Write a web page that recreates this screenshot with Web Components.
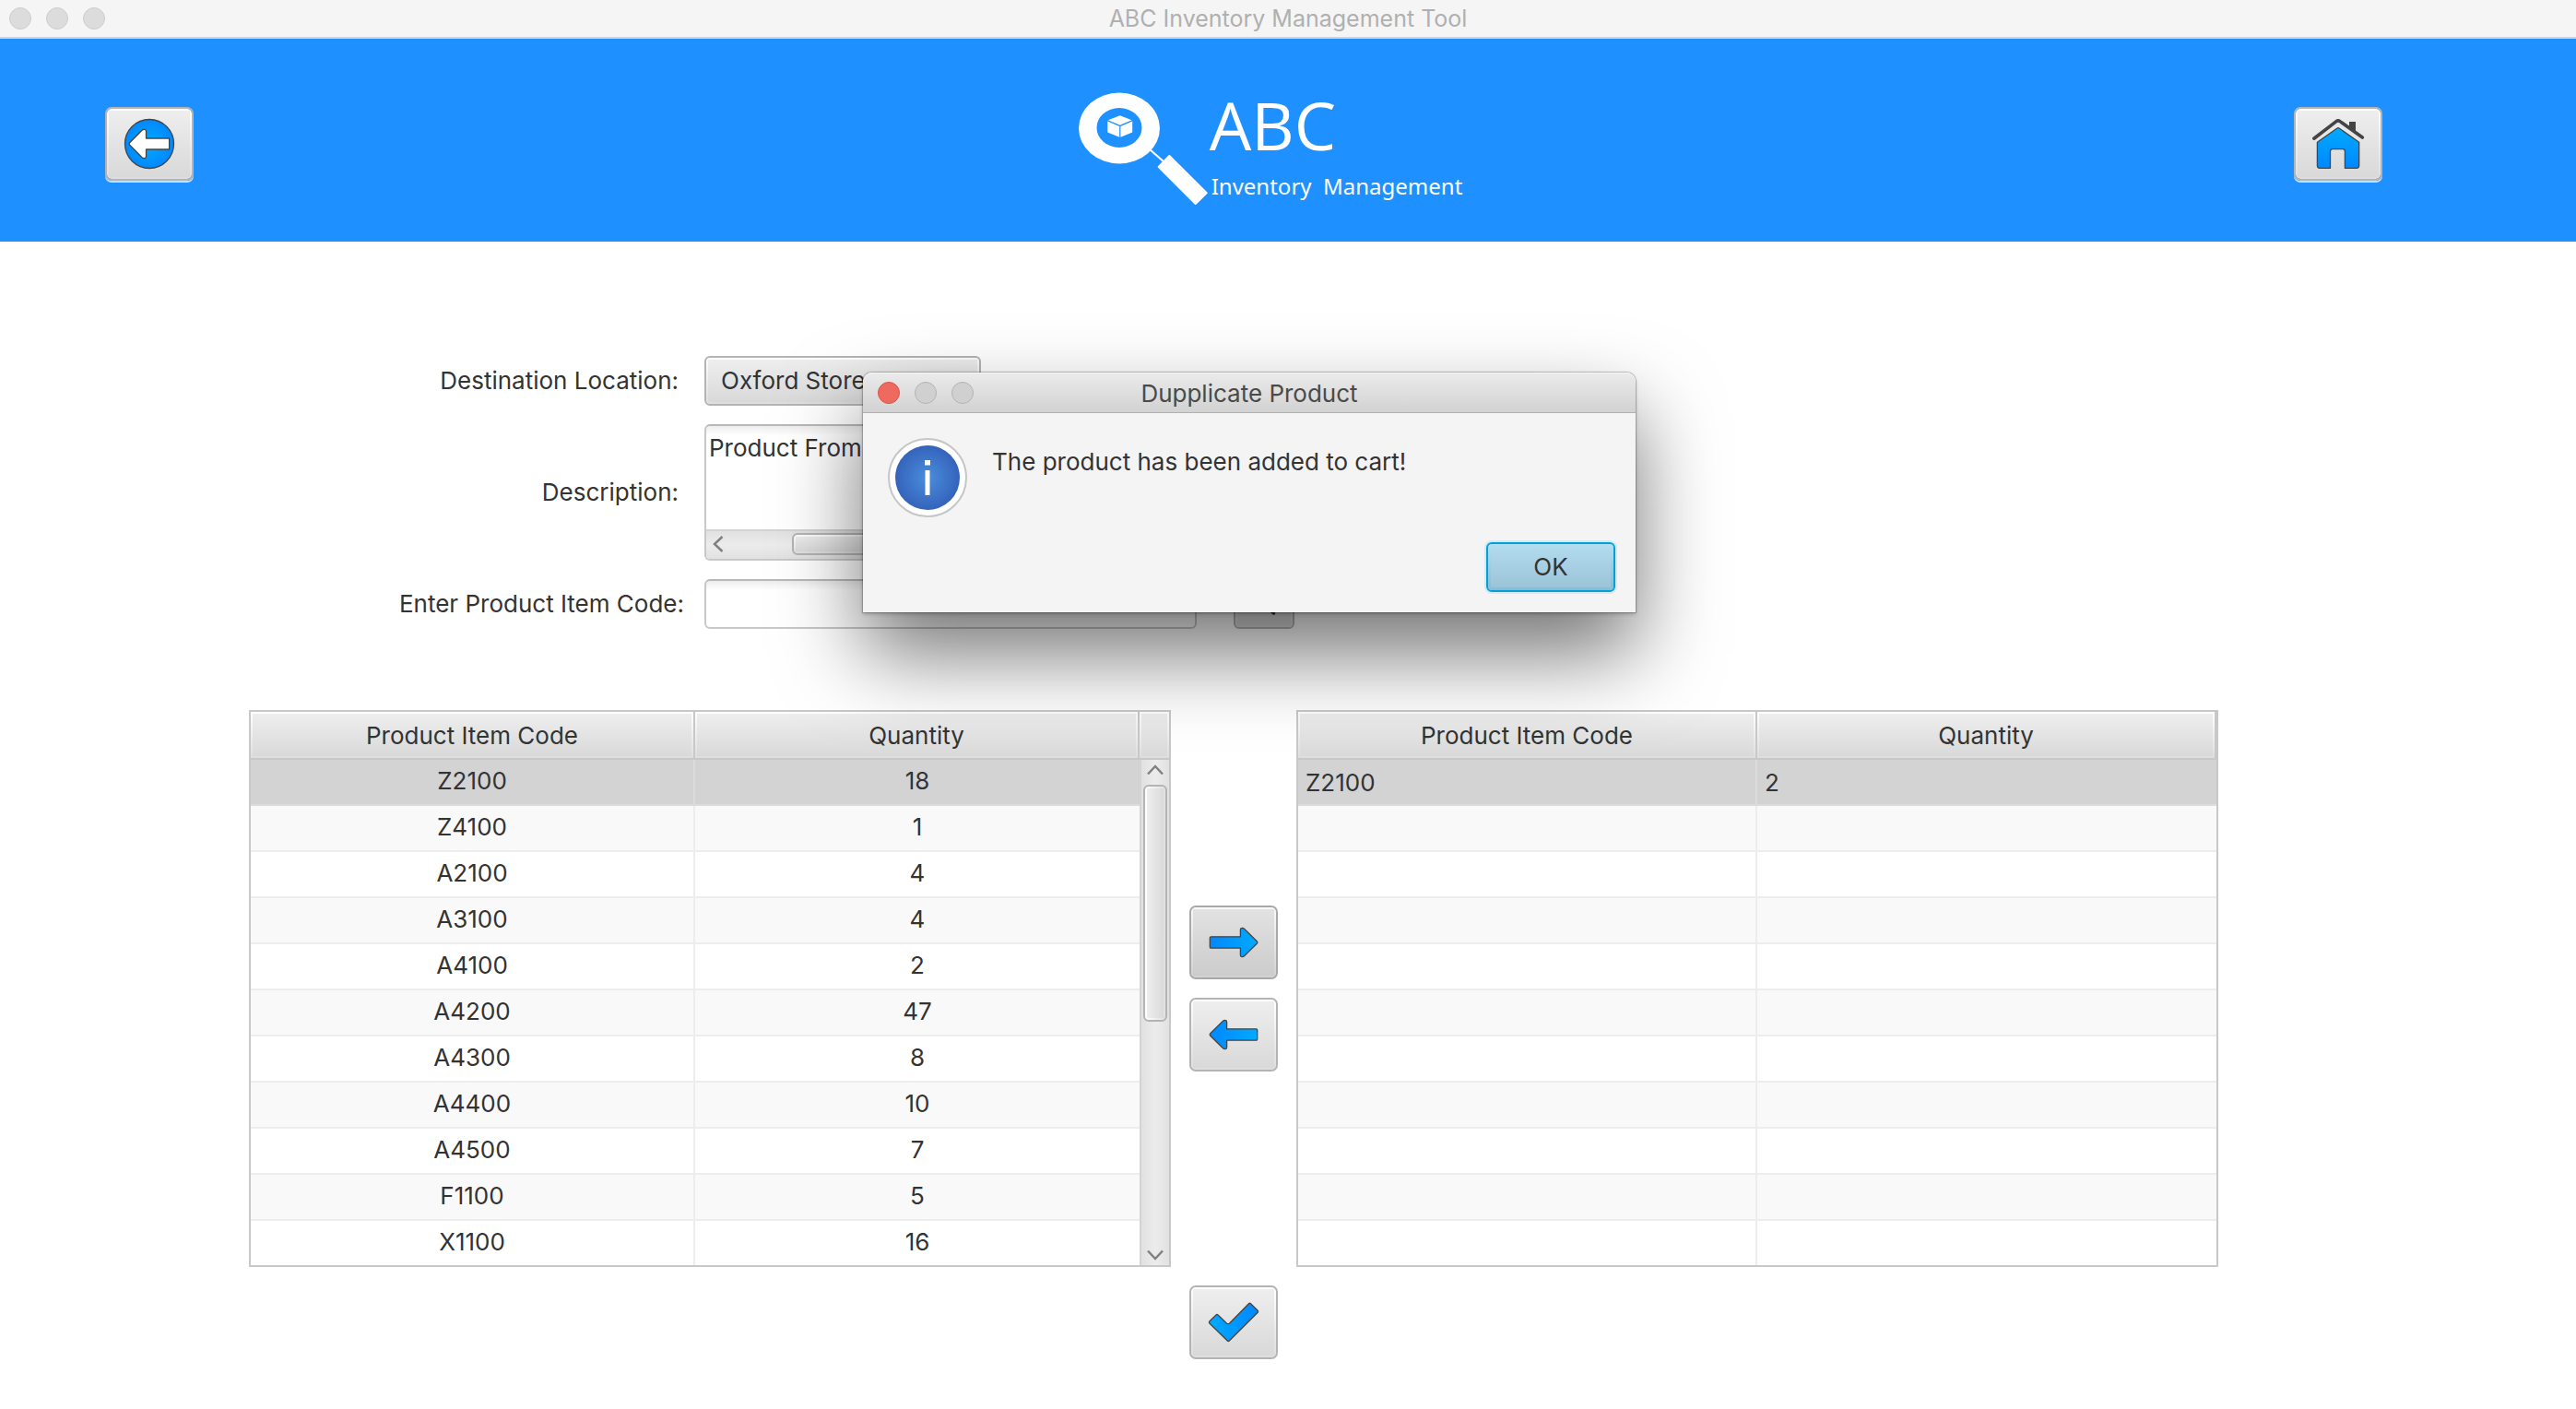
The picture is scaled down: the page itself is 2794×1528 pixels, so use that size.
<!DOCTYPE html>
<html lang="en">
<head>
<meta charset="utf-8">
<title>ABC Inventory Management Tool</title>
<style>
  html { --rim: #b4b4b4; --line: #c8c8c8; --ink: #333; }
  body { margin: 0; background: #fff; color: #333; font: 26px/32px Inter, "Liberation Sans", sans-serif; }
</style>
</head>
<body>
<inventory-app></inventory-app>

<template id="tpl-window-dots">
  <style>
    :host { display: flex; gap: 16px; }
    i { box-sizing: border-box; width: 24px; height: 24px; border-radius: 50%; background: var(--dot, #dcdcdc); border: 1px solid var(--dot-rim, #cdcdcd); }
    :host([active]) i:first-of-type { background: #ee6a5f; border-color: #d9544a; }
  </style>
  <i></i><i></i><i></i>
</template>

<template id="tpl-icon-button">
  <style>
    :host { display: block; width: 96px; }
    button {
      box-sizing: border-box; display: flex; align-items: center; justify-content: center;
      width: 100%; height: 80px; padding: 0; border: 2px solid var(--rim); border-radius: 7px;
      background:
        linear-gradient(#eeeeee, #d9d9d9) 2px 2px / calc(100% - 4px) calc(100% - 4px) no-repeat padding-box,
        linear-gradient(#ffffff, #dedede) padding-box;
    }
    :host([raised]) button { box-shadow: 0 2px 0 rgba(255, 255, 255, .73); }
    :host([hovered]) button {
      border-color: #a9a9a9;
      background:
        linear-gradient(#e2e2e2, #cccccc) 2px 2px / calc(100% - 4px) calc(100% - 4px) no-repeat padding-box,
        linear-gradient(#fafafa, #d2d2d2) padding-box;
    }
  </style>
  <button type="button"><slot></slot></button>
</template>

<template id="tpl-app-logo">
  <style>
    :host { display: flex; color: #fff; font-family: "Open Sans", "Noto Sans", sans-serif; }
    svg { flex: none; }
    .name { font-size: 72px; line-height: 74px; }
    .sub { margin-top: 12px; padding-left: 2px; font-family: "Noto Sans", sans-serif; font-size: 24px; line-height: 36px; white-space: pre; }
  </style>
  <svg width="144" height="126" viewBox="0 0 144 126" aria-hidden="true">
    <path fill="#fff" fill-rule="evenodd" d="M2 41a44 38.500 0 1 0 88 0a44 38.500 0 1 0 -88 0zM21.500 40.500a24.500 21.500 0 1 1 49 0a24.500 21.500 0 1 1 -49 0z"/>
    <path fill="#fff" d="M46.800 27.300L59.500 32.300L46.800 37.800L33.800 32.300zM33.300 33.500L46.200 39V50.700L33.300 45.500zM60.200 33.500L47.400 39V50.700L60.200 45.500z"/>
    <path stroke="#fff" stroke-width="2.200" d="M79 64L95 78"/>
    <path fill="#fff" stroke="#fff" stroke-width="2" stroke-linejoin="round" d="M88.700 83L100.300 71L140.700 111.300L128.700 123z"/>
  </svg>
  <div><div class="name">ABC</div><div class="sub">Inventory  Management</div></div>
</template>

<template id="tpl-scroll-bar">
  <style>
    :host { display: flex; box-sizing: border-box; background: linear-gradient(90deg, #e1e1e1, #ececec 50%, #e1e1e1); border-left: 2px solid #d4d4d4; flex-direction: column; align-items: center; padding: 0 2px; }
    :host([horizontal]) { flex-direction: row; border-left: 0; border-top: 2px solid #d4d4d4; padding: 2px 0 4px; background: linear-gradient(#e1e1e1, #ececec 50%, #e1e1e1); }
    button { display: flex; flex: none; align-items: center; justify-content: center; width: 26px; height: 22px; padding: 0; border: 0; background: none; }
    :host([horizontal]) button { width: 26px; height: 24px; }
    svg { flex: none; fill: none; stroke: #808080; stroke-width: 2.500; }
    :host([horizontal]) svg { transform: rotate(-90deg); }
    .track { display: flex; flex: 1; align-self: stretch; flex-direction: inherit; }
    .thumb {
      box-sizing: border-box; flex: 0 0 var(--thumb, 50%); margin-top: var(--start-y, 0); margin-left: var(--start-x, 0);
      border: 2px solid var(--rim); border-radius: 6px;
      background:
        linear-gradient(var(--turn, 90deg), #eeeeee, #dadada) 2px 2px / calc(100% - 4px) calc(100% - 4px) no-repeat padding-box,
        linear-gradient(var(--turn, 90deg), #ffffff, #e0e0e0) padding-box;
    }
  </style>
  <button type="button" aria-label="Scroll back"><svg width="20" height="12" viewBox="0 0 20 12"><path d="M2 10.500L10 2L18 10.500"/></svg></button>
  <div class="track"><div class="thumb"></div></div>
  <button type="button" aria-label="Scroll forward"><svg width="20" height="12" viewBox="0 0 20 12"><path d="M2 1.500L10 10L18 1.500"/></svg></button>
</template>

<template id="tpl-stock-table">
  <style>
    :host { display: flex; border: 2px solid var(--line); background: #fff; }
    table { flex: 1; width: 100%; table-layout: fixed; border-spacing: 0; }
    th, .corner {
      box-sizing: border-box; height: 52px; padding: 2px 0 0; font-weight: 400; border: 0 solid var(--line); border-width: 0 2px 2px 0;
      background:
        linear-gradient(#eeeeee, #d9d9d9) 2px 2px / calc(100% - 4px) calc(100% - 4px) no-repeat padding-box,
        linear-gradient(#ffffff, #dedede) padding-box;
    }
    td { box-sizing: border-box; height: 50px; padding: 2px 8px 0; border: 0 solid #ededed; border-width: 0 2px 2px 0; }
    td:last-child { border-right: 0; }
    tr:nth-child(even) td { background: #f9f9f9; }
    tr:last-child td { height: 48px; border-bottom: 0; }
    tr.selected td { background: #d3d3d3; border-color: #dcdcdc; }
    :host([centered]) td { padding: 0 8px 2px; text-align: center; }
    .side { display: none; flex: 0 0 32px; flex-direction: column; }
    :host([scrollable]) .side { display: flex; }
    .corner { border-right: 0; }
    scroll-bar { flex: 1; --thumb: 257px; --start-y: 5px; }
  </style>
  <table><thead><tr></tr></thead><tbody></tbody></table>
  <div class="side"><div class="corner"></div><scroll-bar></scroll-bar></div>
</template>

<template id="tpl-transfer-form">
  <style>
    :host { display: block; }
    form { display: grid; grid-template-columns: 474px auto auto; gap: 20px; justify-content: start; align-items: center; }
    label { justify-self: end; padding-right: 8px; }
    label.wide { padding-right: 2px; }
    select, input, textarea { box-sizing: border-box; margin: 0; color: inherit; font: inherit; outline: 0; }
    select, .find {
      border: 2px solid var(--rim); border-radius: 6px; appearance: none;
      background:
        linear-gradient(#eeeeee, #d9d9d9) 2px 2px / calc(100% - 4px) calc(100% - 4px) no-repeat padding-box,
        linear-gradient(#ffffff, #dedede) padding-box;
    }
    select { width: 300px; height: 54px; padding: 0 16px; }
    .box, input { width: 534px; border: 2px solid var(--line); border-top-color: #b8b8b8; border-radius: 6px; background: linear-gradient(#ededed, #fff 10px); }
    .box { box-sizing: border-box; display: flex; flex-direction: column; height: 148px; overflow: hidden; }
    textarea { flex: 1; min-height: 0; padding: 8px 3px; border: 0; resize: none; overflow: hidden; background: none; }
    .box scroll-bar { flex: 0 0 32px; --turn: 180deg; --thumb: 320px; --start-x: 67px; }
    input { height: 54px; padding: 0 12px; }
    .find { display: flex; align-items: center; justify-content: center; width: 66px; height: 54px; margin-left: 20px; padding: 0; }
    .span { grid-column: 2 / 4; }
  </style>
  <form>
    <label for="dest">Destination Location:</label>
    <select id="dest" class="span"><option>Oxford Store</option></select>
    <label for="desc">Description:</label>
    <div class="box span"><textarea id="desc">Product From</textarea><scroll-bar horizontal></scroll-bar></div>
    <label class="wide" for="code">Enter Product Item Code:</label>
    <input id="code" type="text">
    <button class="find" type="button" aria-label="Find product">
      <svg width="28" height="28" viewBox="0 0 28 28" fill="none" stroke="#333" stroke-width="3.500" stroke-linecap="round"><circle cx="11" cy="11" r="8"/><path d="M17 17L24.500 24"/></svg>
    </button>
  </form>
</template>

<template id="tpl-message-dialog">
  <style>
    :host { display: block; }
    dialog {
      position: static; box-sizing: border-box; display: block; width: 100%; max-width: none; margin: 0; padding: 0; border: 0; color: inherit;
      border-radius: 10px 10px 0 0; background: #f4f4f4;
      box-shadow: 0 0 1px 1px rgba(0, 0, 0, .22), 0 2px 4px rgba(0, 0, 0, .2), 0 44px 90px rgba(0, 0, 0, .55);
    }
    header {
      display: grid; grid-template-columns: 1fr auto 1fr; align-items: center; height: 43px; padding: 0 16px; color: #4a4a4a;
      border-bottom: 1px solid #b1b1b1; border-radius: 10px 10px 0 0; background: linear-gradient(#ebebeb, #d2d2d2); box-shadow: inset 0 1px 0 #f6f6f6;
    }
    h1 { margin: 0; padding-top: 2px; font: inherit; }
    window-dots { --dot: #d0d0d0; --dot-rim: #b3b3b3; }
    .body { display: flex; gap: 27px; padding: 27px 27px 0; }
    p { margin: 10px 0 0; }
    footer { display: flex; justify-content: flex-end; padding: 27px 22px 22px; }
    .ok {
      box-sizing: border-box; width: 140px; height: 54px; padding: 0; color: inherit; font: inherit; outline: 0;
      border: 2px solid #049fd6; border-radius: 6px; box-shadow: 0 0 0 2px #d3e9f3;
      background:
        linear-gradient(#b2daed, #9cc4d9) 3px 3px / calc(100% - 6px) calc(100% - 6px) no-repeat padding-box,
        linear-gradient(#b0dff0, #86bdd5) padding-box;
    }
  </style>
  <dialog open aria-labelledby="title">
    <header><window-dots active></window-dots><h1 id="title"><slot name="title"></slot></h1></header>
    <div class="body">
      <svg width="86" height="86" viewBox="0 0 86 86" aria-hidden="true">
        <defs><radialGradient id="g"><stop offset="0" stop-color="#4a8edc"/><stop offset="1" stop-color="#3463bb"/></radialGradient></defs>
        <circle cx="43" cy="43" r="42" fill="#fff" stroke="#c6c6c6" stroke-width="2"/>
        <circle cx="43" cy="43" r="35" fill="url(#g)"/>
        <path fill="#fff" d="M40 24h6v5.500h-6zM40.500 35h5v27h-5z"/>
      </svg>
      <p><slot></slot></p>
    </div>
    <footer><button class="ok" type="button">OK</button></footer>
  </dialog>
</template>

<template id="tpl-inventory-app">
  <style>
    :host { position: relative; display: block; }
    .titlebar { display: grid; grid-template-columns: 1fr auto 1fr; align-items: center; height: 40px; padding: 0 10px; background: #f5f5f5; border-bottom: 2px solid #d3d3d3; color: #b0b0b0; font-size: 25px; }
    .banner { box-sizing: border-box; display: flex; align-items: center; justify-content: space-between; height: 220px; padding: 8px 210px 0 114px; background: #1e90ff; }
    app-logo { padding: 10px 0 0 56px; }
    main { padding: 124px 388px 54px 270px; }
    .transfer { display: grid; grid-template-columns: 1fr 96px 1fr; column-gap: 20px; row-gap: 20px; margin-top: 88px; }
    .moves { display: flex; flex-direction: column; gap: 20px; padding-top: 212px; }
    .confirm { grid-column: 2; }
    message-dialog { position: absolute; top: 404px; left: 936px; width: 838px; }
    svg { stroke: #444; stroke-width: 1.300; stroke-linejoin: round; }
  </style>
  <svg width="0" height="0" style="position:absolute" aria-hidden="true"><defs>
    <linearGradient id="h"><stop offset="0" stop-color="#08f"/><stop offset="1" stop-color="#0af"/></linearGradient>
    <linearGradient id="r"><stop offset="0" stop-color="#0af"/><stop offset="1" stop-color="#08f"/></linearGradient>
    <linearGradient id="v" x2="0" y2="1"><stop offset="0" stop-color="#0af"/><stop offset="1" stop-color="#08f"/></linearGradient>
    <radialGradient id="c"><stop offset="0" stop-color="#0af"/><stop offset="1" stop-color="#08f"/></radialGradient>
  </defs></svg>
  <div class="titlebar"><window-dots></window-dots><span>ABC Inventory Management Tool</span></div>
  <div class="banner">
    <icon-button raised label="Back">
      <svg width="60" height="60" viewBox="0 0 60 60"><circle cx="30" cy="30" r="26.500" fill="url(#c)"/><path fill="#fff" d="M8.400 29L22 15.200Q23.200 14.200 25 14.400Q26.500 14.800 26.500 16.500V24H51.600V36H26.500V43.500Q26.500 45.200 25 45.600Q23.200 45.800 22 44.800L8.400 31Q7.800 30 8.400 29z"/></svg>
    </icon-button>
    <app-logo></app-logo>
    <icon-button raised label="Home">
      <svg width="60" height="60" viewBox="0 0 60 60">
        <path fill="#444" stroke="none" d="M42 6H49V18.500L42 13.500z"/>
        <path fill="none" stroke-width="3.600" stroke-linecap="round" d="M3.800 24.200L28 5.600Q30 4 32 5.600L56.300 23"/>
        <path fill="url(#v)" d="M29 13Q30 12.200 31 13L52.700 28.300V53.500Q52.700 56.300 50 56.300H37.400V38Q37.400 35.700 35 35.700H24Q21.500 35.700 21.500 38V56.300H10Q7.400 56.300 7.400 53.500V28.300z"/>
      </svg>
    </icon-button>
  </div>
  <main>
    <transfer-form></transfer-form>
    <div class="transfer">
      <stock-table centered scrollable data-rows="Z2100 18,Z4100 1,A2100 4,A3100 4,A4100 2,A4200 47,A4300 8,A4400 10,A4500 7,F1100 5,X1100 16"></stock-table>
      <div class="moves">
        <icon-button hovered label="Add to cart">
          <svg width="60" height="60" viewBox="0 0 60 60"><path fill="url(#h)" d="M4.300 25Q4.300 23.800 5.500 23.800H37.400V16Q37.600 14.300 39 14.300Q40.500 14.200 41.500 15.200L55.500 29Q56.200 30 55.500 31L41.500 44.800Q40.500 45.800 39 45.700Q37.600 45.700 37.400 44V36.200H5.500Q4.300 36.200 4.300 35z"/></svg>
        </icon-button>
        <icon-button label="Remove from cart">
          <svg width="60" height="60" viewBox="0 0 60 60"><path fill="url(#h)" d="M55.700 25Q55.700 23.800 54.500 23.800H22.600V16Q22.400 14.300 21 14.300Q19.500 14.200 18.500 15.200L4.500 29Q3.800 30 4.500 31L18.500 44.800Q19.500 45.800 21 45.700Q22.400 45.700 22.600 44V36.200H54.500Q55.700 36.200 55.700 35z"/></svg>
        </icon-button>
      </div>
      <stock-table data-rows="Z2100 2,,,,,,,,,,"></stock-table>
      <icon-button class="confirm" label="Confirm">
        <svg width="60" height="60" viewBox="0 0 60 60"><path fill="url(#r)" d="M3.800 29L11 22Q12 21 13 22L22.600 31.200Q24 32 25.400 31.200L46.500 9.800Q47.500 8.800 48.500 9.800L56.200 17.300Q57 18.300 56.200 19.300L25.300 50Q24.300 51 23.300 50L3.800 31Q3 30 3.800 29z"/></svg>
      </icon-button>
    </div>
  </main>
  <message-dialog><span slot="title">Dupplicate Product</span>The product has been added to cart!</message-dialog>
</template>

<script>
  class Part extends HTMLElement {
    constructor() {
      super();
      const tpl = document.getElementById('tpl-' + this.localName);
      this.attachShadow({ mode: 'open' }).append(tpl.content.cloneNode(true));
    }
  }

  class IconButton extends Part {
    connectedCallback() {
      this.shadowRoot.querySelector('button').setAttribute('aria-label', this.getAttribute('label'));
    }
  }

  class StockTable extends Part {
    connectedCallback() {
      const head = this.shadowRoot.querySelector('thead tr');
      const body = this.shadowRoot.querySelector('tbody');
      head.innerHTML = '<th scope="col">Product Item Code</th><th scope="col">Quantity</th>';
      body.innerHTML = this.dataset.rows.split(',').map((row, i) => {
        const [code = '', qty = ''] = row.split(' ');
        return `<tr${i ? '' : ' class="selected"'}><td>${code}</td><td>${qty}</td></tr>`;
      }).join('');
    }
  }

  customElements.define('window-dots', class extends Part {});
  customElements.define('app-logo', class extends Part {});
  customElements.define('scroll-bar', class extends Part {});
  customElements.define('icon-button', IconButton);
  customElements.define('stock-table', StockTable);
  customElements.define('transfer-form', class extends Part {});
  customElements.define('message-dialog', class extends Part {});
  customElements.define('inventory-app', class extends Part {});
</script>
</body>
</html>
